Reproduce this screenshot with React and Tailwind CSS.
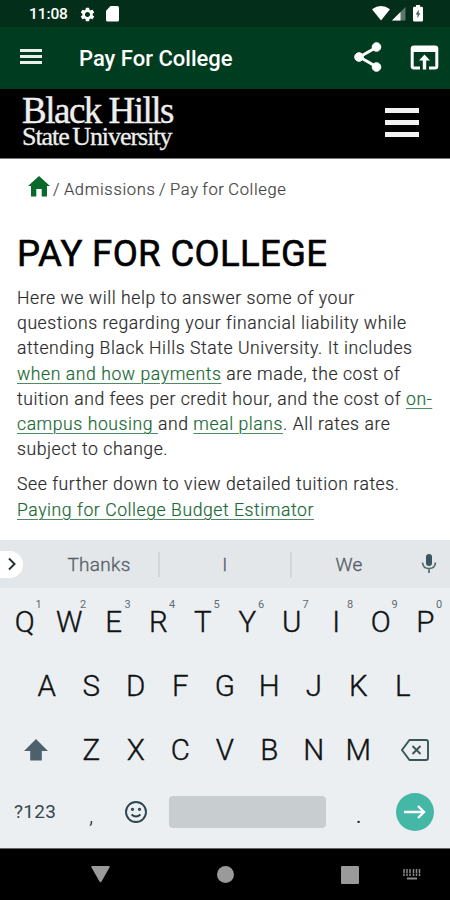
const TOP_KEYS = 'QWERTYUIOP'.split('');
const MID_KEYS = 'ASDFGHJKL'.split('');
const LOW_KEYS = 'ZXCVBNM'.split('');

function StatusBar() {
  return (
    <div className="flex h-[27px] items-center bg-[#032f1a] pl-[29px] pr-[26px] text-white">
      <span className="w-[40px] whitespace-nowrap text-[15.5px] font-medium leading-[27px] tracking-[-0.1px] pt-[2px]">11:08</span>
      <svg className="ml-[10px] mt-px" width="17" height="17" viewBox="0 0 24 24" fill="currentColor">
        <path d="M19.14 12.94c.04-.3.06-.61.06-.94 0-.32-.02-.64-.07-.94l2.03-1.58a.49.49 0 0 0 .12-.61l-1.92-3.32a.488.488 0 0 0-.59-.22l-2.39.96c-.5-.38-1.03-.7-1.62-.94l-.36-2.54a.484.484 0 0 0-.48-.41h-3.84c-.24 0-.43.17-.47.41l-.36 2.54c-.59.24-1.13.57-1.62.94l-2.39-.96c-.22-.08-.47 0-.59.22L2.74 8.87c-.12.21-.08.47.12.61l2.03 1.58c-.05.3-.09.63-.09.94s.02.64.07.94l-2.03 1.58a.49.49 0 0 0-.12.61l1.92 3.32c.12.22.37.29.59.22l2.39-.96c.5.38 1.03.7 1.62.94l.36 2.54c.05.24.24.41.48.41h3.84c.24 0 .44-.17.47-.41l.36-2.54c.59-.24 1.13-.56 1.62-.94l2.39.96c.22.08.47 0 .59-.22l1.92-3.32c.12-.22.07-.47-.12-.61l-2.01-1.58zM12 15.6c-1.98 0-3.6-1.62-3.6-3.6s1.62-3.6 3.6-3.6 3.6 1.62 3.6 3.6-1.62 3.6-3.6 3.6z" />
      </svg>
      <svg className="ml-[10px] mt-px" width="13" height="16" viewBox="0 0 13 16" fill="currentColor">
        <path d="M4.5 0H11.4Q13 0 13 1.6V14Q13 15.500 11.400 15.500H1.600Q0 15.500 0 14V4.800Z" />
      </svg>
      <svg className="ml-auto" width="18" height="15" viewBox="0 0 18 15" fill="currentColor">
        <path d="M0 3.200Q9-3.200 18 3.200L9 14.500Z" />
      </svg>
      <svg className="ml-[2px] mt-px" width="14" height="14" viewBox="0 0 14 14" fill="currentColor">
        <path d="M13.500 0V13.500H0Z" opacity=".35" />
        <path d="M8.500 5V13.500H0Z" />
      </svg>
      <svg className="ml-[7px] mr-px" width="10" height="17" viewBox="0 0 10 17">
        <path d="M3 0H7V1.800H8.600Q10 1.800 10 3V15.200Q10 16.500 8.600 16.500H1.400Q0 16.500 0 15.200V3Q0 1.800 1.400 1.800H3Z" fill="#fff" />
        <path d="M5.700 4.500L2.700 9.600H4.500V13.200L7.300 8.200H5.700Z" fill="#4b5f54" />
      </svg>
    </div>
  );
}

function AppBar() {
  return (
    <div className="flex h-[62px] items-center bg-[#003d20] text-white">
      <div className="ml-[20px] mb-[3px] flex w-[22px] flex-col gap-[3px]">
        <i className="h-[3px] bg-[#e9efe9]" />
        <i className="h-[3px] bg-[#e9efe9]" />
        <i className="h-[3px] bg-[#e9efe9]" />
      </div>
      <h1 className="ml-[37px] mt-[2px] w-[160px] whitespace-nowrap text-[22px] font-medium leading-[60px]">Pay For College</h1>
      <svg className="ml-[114px] mb-[2px]" width="30" height="32" viewBox="0 0 30 32" fill="#fff" stroke="#fff">
        <path d="M24 6L6.500 16L24 26" fill="none" strokeWidth="3" />
        <circle cx="23.500" cy="6" r="4.300" />
        <circle cx="6" cy="16" r="4.300" />
        <circle cx="23.500" cy="26" r="4.300" />
      </svg>
      <svg className="ml-[27px]" width="29" height="26" viewBox="0 0 29 26" fill="#fff">
        <path d="M10 24.500H4Q.7 24.500.7 21.500V3.500Q.7.500 4 .5H25Q28.300.5 28.300 3.500V21.500Q28.300 24.500 25 24.500H19V21.500H25.300V7H3.700V21.500H10Z" />
        <path d="M14.500 9.500L20 15.500H16.200V24.500H12.800V15.500H9Z" />
      </svg>
    </div>
  );
}

function SiteHeader() {
  return (
    <div className="flex h-[70px] justify-between border-b border-[#777] bg-black pl-[22px] pr-[31px] text-[#eee]">
      <div className="whitespace-nowrap pt-[4px] font-['Liberation_Serif',serif]">
        <div className="h-[31px] text-[37px] leading-[35px] tracking-[-1.5px] [-webkit-text-stroke:0.4px_#eee]">Black Hills</div>
        <div className="text-[26px] leading-[26px] tracking-[-1.05px] [-webkit-text-stroke:0.3px_#eee] [word-spacing:-2px]">State University</div>
      </div>
      <div className="flex w-[34px] flex-col gap-[7px] pt-[19px]">
        <i className="h-[5px] bg-[#f2f2f2]" />
        <i className="h-[5px] bg-[#f2f2f2]" />
        <i className="h-[5px] bg-[#f2f2f2]" />
      </div>
    </div>
  );
}

function Link({ children }) {
  return <a className="text-[#1c6a37] underline decoration-[#4f8a63] decoration-1 underline-offset-[3px] [-webkit-text-stroke:0.2px_#1c6a37]">{children}</a>;
}

function Content() {
  return (
    <main className="h-[381px] bg-white pl-[17px]">
      <nav className="flex h-[60px] items-center pl-[11px] text-[16.5px] font-light text-[#444] [-webkit-text-stroke:0.2px_#444]">
        <svg className="mb-[5px]" width="22" height="21" viewBox="0 0 22 21" fill="#08692b">
          <path d="M11 0L22 10H19V20.500H13.700V13H8.300V20.500H3V10H0Z" />
        </svg>
        <span className="ml-[3px] mt-[2px] whitespace-nowrap tracking-[0.66px] [word-spacing:-1px]">/ Admissions / Pay for College</span>
      </nav>
      <h2 className="mt-[15px] h-[40px] whitespace-nowrap text-[36.5px] font-normal leading-[40px] tracking-[0.36px] text-black [-webkit-text-stroke:0.6px_#000]">PAY FOR COLLEGE</h2>
      <div className="mt-[12px] whitespace-nowrap text-[17.6px] font-light leading-[25.2px] tracking-[0.56px] text-[#2c2c2c] [-webkit-text-stroke:0.2px_#2c2c2c]">
        <p>
          Here we will help to answer some of your<br />
          questions regarding your financial liability while<br />
          attending Black Hills State University. It includes<br />
          <Link>when and how payments</Link> are made, the cost of<br />
          tuition and fees per credit hour, and the cost of <Link>on-</Link><br />
          <Link>campus housing </Link>and <Link>meal plans</Link>. All rates are<br />
          subject to change.
        </p>
        <p className="mt-[10px]">
          See further down to view detailed tuition rates.<br />
          <Link>Paying for College Budget Estimator</Link>
        </p>
      </div>
    </main>
  );
}

function Suggestions() {
  return (
    <div className="flex h-[48px] items-center bg-[#e4e7e9] text-[19px] font-light tracking-[0.3px] text-[#56626a] [-webkit-text-stroke:0.35px_#56626a]">
      <div className="flex h-[27px] w-[23px] items-center justify-center rounded-r-full bg-white">
        <svg width="10" height="14" viewBox="0 0 10 14" fill="none" stroke="#2d3335" strokeWidth="2">
          <path d="M2 1.500L7.500 7L2 12.500" />
        </svg>
      </div>
      <span className="ml-[17px] mt-[2px] w-[118px] text-center">Thanks</span>
      <i className="h-[25px] w-[2px] bg-[#d2d6d8]" />
      <span className="mt-[2px] w-[130px] text-center">I</span>
      <i className="h-[25px] w-[2px] bg-[#d2d6d8]" />
      <span className="mt-[2px] w-[114px] text-center">We</span>
      <svg className="ml-[15px]" width="16" height="20" viewBox="0 0 16 20" fill="#37565d">
        <rect x="5" y="0" width="6" height="12" rx="3" />
        <path d="M1.500 8.500Q2 14.500 8 14.500T14.500 8.500M8 14.500V19" fill="none" stroke="#526a70" strokeWidth="1.700" />
      </svg>
    </div>
  );
}

function Key({ children, hint }) {
  return (
    <div className="relative flex w-[44.500px] items-center justify-center">
      {children}
      {hint && <sup className="absolute left-[31px] top-[9px] w-[10px] text-center text-[11px] font-normal leading-[12px] text-[#5f6c72] [-webkit-text-stroke:0]">{hint}</sup>}
    </div>
  );
}

function Keyboard() {
  return (
    <div className="h-[260px] bg-[#eceff1] text-[29.500px] font-light leading-none text-[#101314] [-webkit-text-stroke:0.4px_#101314]">
      <div className="flex h-[67px] pl-[2.500px] pt-[2px]">
        {TOP_KEYS.map((k, i) => <Key key={k} hint={String((i + 1) % 10)}>{k}</Key>)}
      </div>
      <div className="flex h-[64px] pl-[24.500px]">
        {MID_KEYS.map((k) => <Key key={k}>{k}</Key>)}
      </div>
      <div className="flex h-[64px] items-center">
        <div className="mb-[3px] flex w-[69px] justify-center pl-[2px]">
          <svg width="24" height="22" viewBox="0 0 24 22" fill="#4c6169">
            <path d="M12 0L24 12H17.800V21.500H6.200V12H0Z" />
          </svg>
        </div>
        {LOW_KEYS.map((k) => <Key key={k}>{k}</Key>)}
        <svg className="mb-[3px] ml-[20px]" width="28" height="22" viewBox="0 0 28 22" fill="none" stroke="#3b555b" strokeWidth="1.900">
          <path d="M8.500 1H25Q27 1 27 3V19Q27 21 25 21H8.500L1 11Z" />
          <path d="M11.500 7L19.500 15M19.500 7L11.500 15" />
        </svg>
      </div>
      <div className="flex h-[57px] items-center [-webkit-text-stroke:0]">
        <span className="ml-[14px] w-[44px] whitespace-nowrap text-[19px] font-normal tracking-[0.3px] text-[#37474f]">?123</span>
        <span className="ml-[31px] mt-[8px] w-[8px] text-[22px] text-[#222]">,</span>
        <svg className="ml-[27px]" width="24" height="24" viewBox="0 0 24 24" fill="none" stroke="#2b464d" strokeWidth="1.900">
          <circle cx="12" cy="12" r="10" />
          <circle cx="8.500" cy="9.300" r=".7" />
          <circle cx="15.500" cy="9.300" r=".7" />
          <path d="M7.500 14.500Q12 18.500 16.500 14.500" />
        </svg>
        <div className="ml-[21px] h-[32px] w-[157px] rounded-[4px] bg-[#c8cdd0]" />
        <span className="ml-[30px] mt-[8px] w-[8px] text-[20px] font-normal text-[#222]">.</span>
        <div className="ml-[32px] flex size-[38px] items-center justify-center rounded-full bg-[#44b7a7]">
          <svg width="22" height="14" viewBox="0 0 22 14" fill="none" stroke="#fff" strokeWidth="2.400">
            <path d="M0 7H20M14 1L20 7L14 13" />
          </svg>
        </div>
      </div>
    </div>
  );
}

function NavBar() {
  return (
    <div className="flex h-[52px] items-center border-t border-[#666] bg-black">
      <svg className="ml-[91px]" width="19" height="17" viewBox="0 0 19 17" fill="#9a9a9a">
        <path d="M1 0H18Q19 .3 18.500 1.500L10.500 15.500Q9.500 17 8.500 15.500L.5 1.500Q0 .3 1 0Z" />
      </svg>
      <div className="ml-[107px] size-[17px] rounded-full bg-[#9a9a9a]" />
      <div className="ml-[107px] size-[18px] rounded-[1px] bg-[#9a9a9a]" />
      <svg className="ml-[44px]" width="18" height="12" viewBox="0 0 18 12" fill="none" stroke="#8a8a8a">
        <path d="M1 0V7M4 0V7M7 0V7M10.500 0V7M13.500 0V7M16.500 0V7" strokeWidth="1.500" strokeDasharray="4 .5" />
        <path d="M4 9.500H14" strokeWidth="2" />
      </svg>
    </div>
  );
}

export default function App() {
  return (
    <div className="h-[900px] w-[450px] overflow-hidden bg-white font-['Roboto',sans-serif]">
      <StatusBar />
      <AppBar />
      <SiteHeader />
      <Content />
      <Suggestions />
      <Keyboard />
      <NavBar />
    </div>
  );
}
